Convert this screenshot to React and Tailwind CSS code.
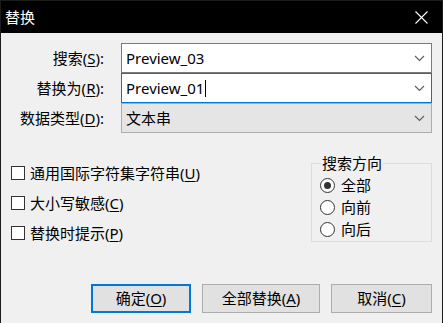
import React from "react";

const U = ({ children }) => <span className="underline underline-offset-2">{children}</span>;

function Chevron() {
  return (
    <svg width="11" height="7" viewBox="0 0 11 7" className="shrink-0">
      <polyline points="1,1 5.5,5.5 10,1" fill="none" stroke="#5f5f5f" strokeWidth="1.2" />
    </svg>
  );
}

function Combo({ text, variant, caret }) {
  const cls =
    variant === "focus"
      ? "bg-white border-[#0078d7]"
      : variant === "disabled"
      ? "bg-[#e5e5e5] border-[#adadad]"
      : "bg-white border-[#7a7a7a]";
  return (
    <div className={`ml-[17px] w-[311px] h-[30px] border ${cls} flex items-center pl-[4px] pr-[6px]`}>
      <div className="flex-1 flex items-center text-[15px] text-black leading-none">
        <span>{text}</span>
        {caret && <span className="ml-[1px] w-px h-[17px] bg-black" />}
      </div>
      <Chevron />
    </div>
  );
}

function FieldRow({ label, combo }) {
  return (
    <div className="flex items-center">
      <div className="w-[103px] text-right text-[15px] leading-none text-black whitespace-nowrap">{label}</div>
      {combo}
    </div>
  );
}

function Check({ children }) {
  return (
    <div className="h-[30px] flex items-center">
      <div className="w-[14px] h-[14px] min-w-[14px] min-h-[14px] border border-[#333333] bg-white shrink-0" />
      <span className="ml-[5px] text-[15px] leading-none text-black whitespace-nowrap">{children}</span>
    </div>
  );
}

function Radio({ checked, children }) {
  return (
    <div className="h-[22px] flex items-center">
      <div className="w-[15px] h-[15px] min-w-[15px] rounded-full border border-[#333333] bg-white flex items-center justify-center shrink-0">
        {checked && <div className="w-[7px] h-[7px] rounded-full bg-[#333333]" />}
      </div>
      <span className="ml-[6px] text-[15px] leading-none text-black">{children}</span>
    </div>
  );
}

function Btn({ w, primary, children }) {
  return (
    <div
      className={`${w} h-[29px] bg-[#e1e1e1] flex items-center justify-center text-[15px] leading-none text-black ${
        primary ? "border-2 border-[#0078d7]" : "border border-[#adadad]"
      }`}
    >
      {children}
    </div>
  );
}

export default function App() {
  return (
    <div className="w-[443px] h-[323px] bg-[#f0f0f0] border-x border-t border-[#1c1c1c] flex flex-col overflow-hidden font-['Noto_Sans','Noto_Sans_CJK_SC',sans-serif]">
      <div className="h-[32px] bg-black flex items-center justify-between pl-[4px] pr-[14px] shrink-0">
        <span className="text-white text-[15px] leading-none">替换</span>
        <svg width="13" height="13" viewBox="0 0 13 13">
          <line x1="0.5" y1="0.5" x2="12.5" y2="12.5" stroke="white" strokeWidth="1.1" />
          <line x1="12.5" y1="0.5" x2="0.5" y2="12.5" stroke="white" strokeWidth="1.1" />
        </svg>
      </div>

      <div className="flex-1 flex flex-col">
        <div className="pt-[10px] flex flex-col">
          <FieldRow label={<>搜索(<U>S</U>):</>} combo={<Combo text="Preview_03" />} />
          <FieldRow label={<>替换为(<U>R</U>):</>} combo={<Combo text="Preview_01" variant="focus" caret />} />
          <FieldRow label={<>数据类型(<U>D</U>):</>} combo={<Combo text="文本串" variant="disabled" />} />
        </div>

        <div className="mt-[21px] flex items-start justify-between pr-[10px]">
          <div className="mt-[4px] pl-[10px] flex flex-col">
            <Check>通用国际字符集字符串(<U>U</U>)</Check>
            <Check>大小写敏感(<U>C</U>)</Check>
            <Check>替换时提示(<U>P</U>)</Check>
          </div>
          <fieldset className="w-[121px] border border-[#dcdcdc] pl-[8px] pb-[1px]">
            <legend className="ml-[1px] px-[1px] text-[15px] leading-[18px] text-black">搜索方向</legend>
            <div className="pt-[2px] flex flex-col">
              <Radio checked>全部</Radio>
              <Radio>向前</Radio>
              <Radio>向后</Radio>
            </div>
          </fieldset>
        </div>

        <div className="mt-auto mb-[10px] flex justify-end gap-[11px] pr-[10px]">
          <Btn w="w-[100px]" primary>确定(<U>O</U>)</Btn>
          <Btn w="w-[118px]">全部替换(<U>A</U>)</Btn>
          <Btn w="w-[101px]">取消(<U>C</U>)</Btn>
        </div>
      </div>
    </div>
  );
}
